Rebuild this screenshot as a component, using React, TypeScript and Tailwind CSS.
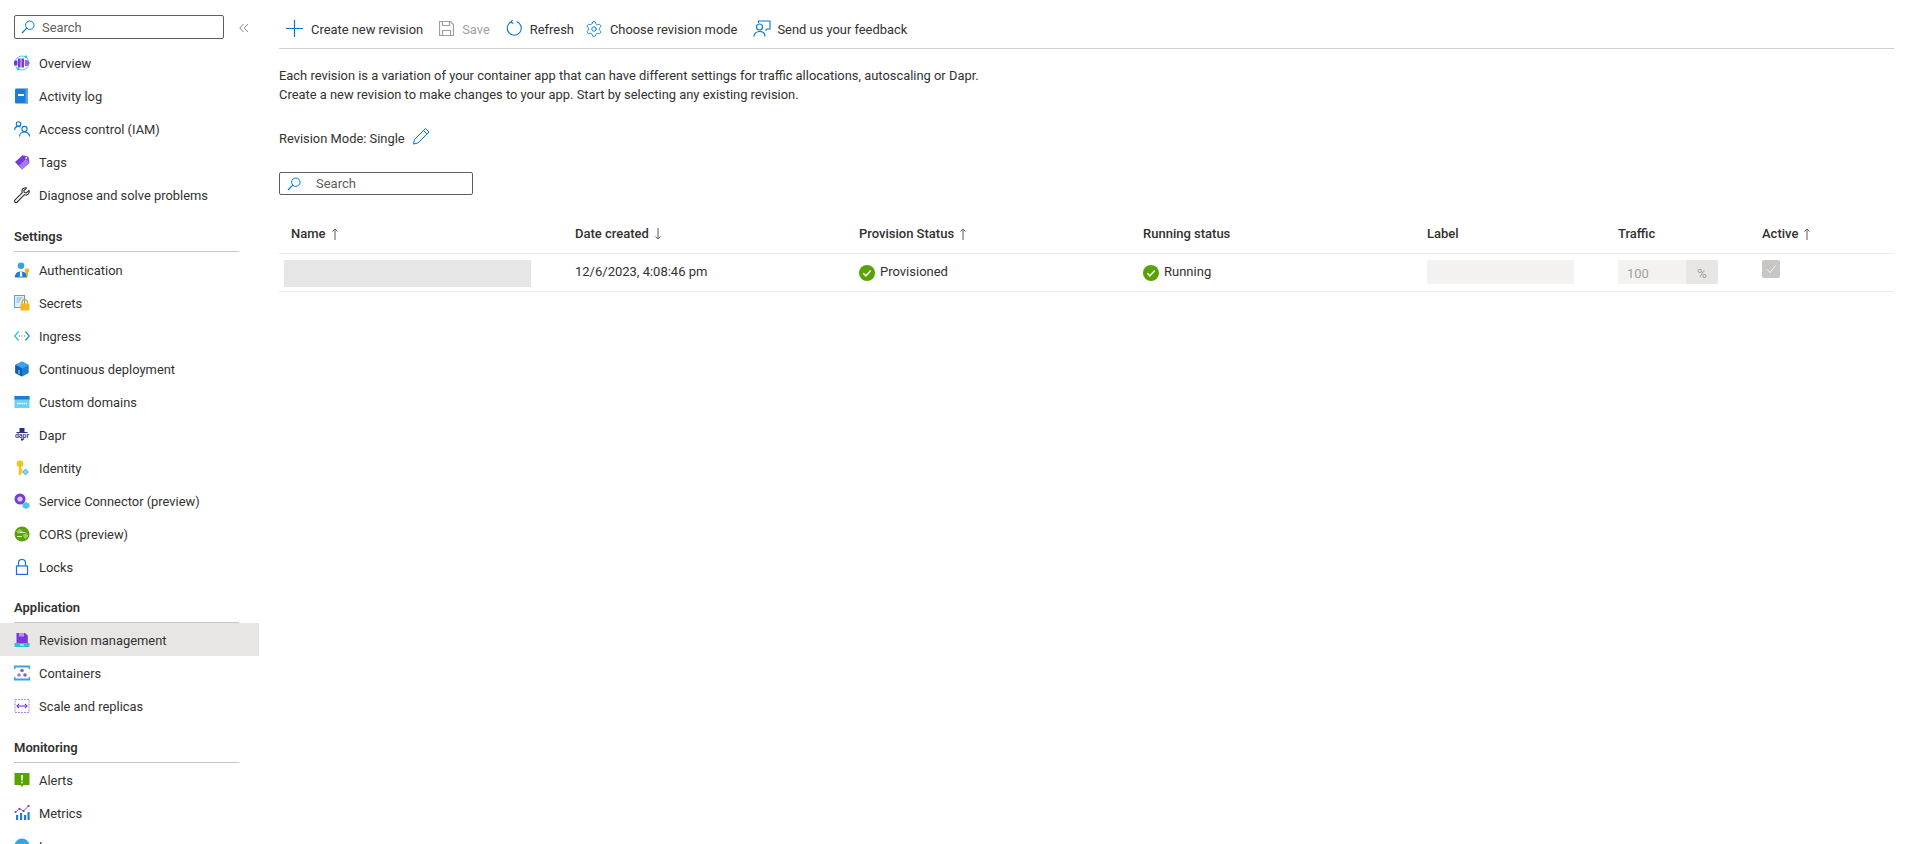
import type { ReactNode } from 'react';
import { Settings } from 'lucide-react';

function Lens() {
  return (
    <svg width="14" height="14" viewBox="0 0 14 14" fill="none" stroke="#0078d4" strokeWidth="1">
      <circle cx="8.8" cy="5.2" r="4.2" />
      <path d="M5.8 8.2 1 13" strokeWidth="1.2" />
    </svg>
  );
}

const icons: Record<string, ReactNode> = {
  overview: (
    <>
      <circle cx="8" cy="8" r="7" fill="none" stroke="#50c7e8" strokeWidth="1" />
      <path d="M1 5.5h2.5v5H1a1 1 0 0 1-1-1v-3a1 1 0 0 1 1-1z" fill="#773adc" />
      <path d="M4 3.5h2.6v9H4zM7.4 3.5H10v9H7.4z" fill="#773adc" />
      <path d="M10.8 5h2.6l2.4 3-2.4 3h-2.6z" fill="#9b5fe8" />
      <circle cx="12" cy="1.8" r="1.4" fill="#32bedd" />
      <circle cx="4" cy="14" r="1.4" fill="#32bedd" />
    </>
  ),
  activity: (
    <>
      <rect x="1" y="0.5" width="13" height="15" rx="1.2" fill="#1b7ed4" />
      <rect x="11.5" y="0.5" width="2.5" height="15" fill="#5ea0ef" />
      <rect x="4" y="6" width="6" height="2" fill="#fff" />
    </>
  ),
  iam: (
    <g fill="none" stroke="#0078d4" strokeWidth="1.1">
      <circle cx="4.5" cy="3" r="2.2" />
      <path d="M.7 9c0-2.2 1.6-3.6 3.8-3.6.8 0 1.5.2 2.1.5" />
      <circle cx="10.5" cy="8" r="2.6" />
      <path d="M5.5 15.5c0-2.6 2.2-4.5 5-4.5s5 1.9 5 4.5" />
    </g>
  ),
  tags: (
    <>
      <path d="M1 8 8.5 1.2l6 1.5 1 6L8 15.5z" fill="#773adc" />
      <path d="M5 11.7 12 5l3.5 3.7L8 15.5z" fill="#a67af4" />
      <circle cx="12.3" cy="4" r="1" fill="#fff" />
    </>
  ),
  wrench: (
    <path
      d="M15 3.5 12.3 6l-2-.4-.5-2L12.5 1C10.5.3 8.3 1.4 8 3.5c-.1.8 0 1.5.3 2.1L1 12.8c-.7.7-.7 1.6 0 2.2s1.5.6 2.2 0l7.2-7.3c.6.3 1.3.4 2 .3 2.2-.4 3.3-2.5 2.6-4.5z"
      fill="none"
      stroke="#323130"
      strokeWidth="1.1"
    />
  ),
  auth: (
    <>
      <circle cx="7" cy="3.8" r="3.3" fill="#32a5dd" />
      <path d="M.8 15.5c0-4 2.4-6 6.2-6s6.2 2 6.2 6z" fill="#1b7ed4" />
      <path d="M6.2 9.5h1.6l.5 5H5.7z" fill="#fff" />
      <circle cx="13" cy="8.5" r="2.3" fill="#f5b91e" />
      <path d="M12.2 9.5h1.6v5h-1.6z" fill="#e8a500" />
    </>
  ),
  secrets: (
    <>
      <rect x="0.5" y="0.5" width="10" height="12" fill="#e2f0fb" stroke="#5ea0d8" />
      <path d="M2.5 3h6M2.5 5h4M2.5 7h3" stroke="#7ab0dc" strokeWidth="1" />
      <path d="M8 9V7.5a2.8 2.8 0 0 1 5.6 0V9" fill="none" stroke="#e8a500" strokeWidth="1.2" />
      <rect x="6.5" y="8.5" width="9" height="7" rx="0.6" fill="#f8b51c" />
    </>
  ),
  ingress: (
    <>
      <path d="M4.5 3.5 0.8 8l3.7 4.5" fill="none" stroke="#32bedd" strokeWidth="1.3" />
      <path d="M11.5 3.5 15.2 8l-3.7 4.5" fill="none" stroke="#1b8fe0" strokeWidth="1.3" />
      <path d="M5 8h1M7.5 8h1M10 8h1" stroke="#76bc2d" strokeWidth="1.4" />
    </>
  ),
  deploy: (
    <>
      <path d="M8 0.5 14.7 4v8L8 15.5 1.3 12V4z" fill="#1b7ed4" />
      <path d="M8 .5 14.7 4 8 7.5 1.3 4z" fill="#3ea0ef" />
      <path d="M1.3 4 8 7.5v8L1.3 12z" fill="#0a5cb0" />
      <path d="M5 9v4" stroke="#bfe0f7" strokeWidth="1" />
    </>
  ),
  domains: (
    <>
      <rect x="0.5" y="2" width="15" height="12" fill="#6ad2f0" />
      <rect x="0.5" y="2" width="15" height="3.5" fill="#1b7ed4" />
      <path d="M3 9.5h10" stroke="#fff" strokeWidth="1.5" strokeDasharray="1.5 .7" />
    </>
  ),
  dapr: (
    <>
      <rect x="5.5" y="1" width="5" height="4.5" fill="#2a2f7e" />
      <rect x="2.5" y="5" width="11" height="1" fill="#2a2f7e" />
      <text x="8" y="11" textAnchor="middle" fontSize="7" fontWeight="700" fill="#3c4196" fontFamily="Roboto, sans-serif">
        dapr
      </text>
      <rect x="7" y="11.5" width="2" height="2" fill="#2a2f7e" />
    </>
  ),
  identity: (
    <>
      <circle cx="6" cy="3.8" r="3.3" fill="#f8c21c" />
      <path d="M4.8 6h2.4v9H4.8z" fill="#f8c21c" />
      <path d="M7 10h1.5M7 12h1.5" stroke="#e8a500" strokeWidth="1" />
      <path d="m11.5 8.5 3.5 3.5-3.5 3.5L8 12z" fill="#6cbde8" />
      <path d="m11.5 10.5 1.5 1.5-1.5 1.5L10 12z" fill="#a9dcf2" />
    </>
  ),
  connector: (
    <>
      <circle cx="6" cy="6" r="5.5" fill="#773adc" />
      <circle cx="6" cy="6" r="2.6" fill="#d9c8f7" />
      <path d="m12 9 3.5 1.8v3.4L12 16l-3.5-1.8v-3.4z" fill="#50c7e8" />
    </>
  ),
  cors: (
    <>
      <circle cx="8" cy="8" r="7.5" fill="#57a300" />
      <path d="M2 5.5 6 3l3 2.5L5 8zM8.5 9l4-2 2 3-3.5 3z" fill="#9ecb5e" />
      <path d="M3 10.5h5M6 6.5h5.5" stroke="#fff" strokeWidth=".8" />
    </>
  ),
  locks: (
    <g fill="none" stroke="#1b6ee0" strokeWidth="1.2">
      <path d="M4.5 7V4a3.5 3.5 0 0 1 7 0v3" />
      <rect x="2.5" y="7" width="11" height="8.4" />
    </g>
  ),
  revision: (
    <>
      <path d="M2.5 1H11l2.8 2.5V12H2.5z" fill="#773adc" />
      <path d="M5 1h5v3.5H5z" fill="#b796f0" />
      <path d="M0.5 11h15v3a1 1 0 0 1-1 1h-13a1 1 0 0 1-1-1z" fill="#32bedd" />
      <rect x="6" y="12.4" width="4" height="1" fill="#fff" />
    </>
  ),
  containers: (
    <>
      <path d="M.5 4V1.5h15V4M.5 12v2.5h15V12" fill="none" stroke="#32a5dd" strokeWidth="1.8" />
      <circle cx="8" cy="5.5" r="1.8" fill="#8661c5" />
      <circle cx="5" cy="10" r="1.8" fill="#9e7bd6" />
      <circle cx="11" cy="10" r="1.8" fill="#8661c5" />
    </>
  ),
  scale: (
    <g fill="none" stroke="#a98ae8" strokeWidth="1.1">
      <rect x="1" y="1.5" width="14" height="13" strokeDasharray="2 1" />
      <path d="M3 8h10" stroke="#773adc" />
      <path d="M5 6 3 8l2 2M11 6l2 2-2 2" stroke="#773adc" />
    </g>
  ),
  alerts: (
    <>
      <path d="M.5 1h15v12h-6L8 15l-1.5-2h-6z" fill="#57a300" />
      <rect x="7.2" y="3" width="1.6" height="5.5" fill="#fff" />
      <rect x="7.2" y="9.7" width="1.6" height="1.6" fill="#fff" />
    </>
  ),
  metrics: (
    <>
      <path d="M2 15V10h2.2v5zM6 15V8h2.2v7zM10 15v-5h2.2v5zM13.5 15V7h2.1v8z" fill="#1b7ed4" />
      <path d="M1.5 7 5.5 3.8 9.5 6l5-5" fill="none" stroke="#8661c5" strokeWidth="1" />
      <circle cx="1.5" cy="7" r="1.1" fill="#773adc" />
      <circle cx="5.5" cy="3.8" r="1.1" fill="#773adc" />
      <circle cx="9.5" cy="6" r="1.1" fill="#773adc" />
      <circle cx="14.5" cy="1" r="1.1" fill="#773adc" />
    </>
  ),
  logs: (
    <>
      <circle cx="8" cy="8" r="7.5" fill="#32a5e8" />
      <path d="m5 8 2 2 4-4" fill="none" stroke="#fff" strokeWidth="1.3" />
    </>
  ),
};

function Row({ icon, label, active }: { icon: string; label: string; active?: boolean }) {
  return (
    <div className={`flex h-[33px] items-center pl-[14px] ${active ? 'bg-[#e8e6e4]' : ''}`}>
      <svg width="16" height="16" viewBox="0 0 16 16" className="mr-[9px] w-[16px] shrink-0">
        {icons[icon]}
      </svg>
      <span className="pt-[2px]">{label}</span>
    </div>
  );
}

function Section({ title, height }: { title: string; height: string }) {
  return (
    <div className={`flex flex-col justify-end ${height}`}>
      <div className="ml-[14px] mr-[20px] border-b border-[#c8c6c4] pb-[4px] text-[13px] font-semibold leading-[20px]">
        {title}
      </div>
    </div>
  );
}

function Sidebar() {
  return (
    <aside className="h-[844px] w-[259px] shrink-0 overflow-hidden text-[12.9px] text-[#323130]">
      <div className="flex h-[46px] items-start pt-[15px]">
        <div className="ml-[14px] flex h-[24px] w-[210px] items-center gap-[7px] rounded-[2px] border border-[#605e5c] pl-[6px]">
          <Lens />
          <span className="pt-[1px] text-[#605e5c]">Search</span>
        </div>
        <svg width="10" height="10" viewBox="0 0 10 10" fill="none" stroke="#8a8886" className="ml-[15px] mt-[8px]">
          <path d="M4.5 1 .8 5l3.7 4M9 1 5.3 5 9 9" />
        </svg>
      </div>
      <Row icon="overview" label="Overview" />
      <Row icon="activity" label="Activity log" />
      <Row icon="iam" label="Access control (IAM)" />
      <Row icon="tags" label="Tags" />
      <Row icon="wrench" label="Diagnose and solve problems" />
      <div className="mb-[1px]">
        <Section title="Settings" height="h-[41px]" />
      </div>
      <Row icon="auth" label="Authentication" />
      <Row icon="secrets" label="Secrets" />
      <Row icon="ingress" label="Ingress" />
      <Row icon="deploy" label="Continuous deployment" />
      <Row icon="domains" label="Custom domains" />
      <Row icon="dapr" label="Dapr" />
      <Row icon="identity" label="Identity" />
      <Row icon="connector" label="Service Connector (preview)" />
      <Row icon="cors" label="CORS (preview)" />
      <Row icon="locks" label="Locks" />
      <Section title="Application" height="h-[40px]" />
      <Row icon="revision" label="Revision management" active />
      <Row icon="containers" label="Containers" />
      <Row icon="scale" label="Scale and replicas" />
      <Section title="Monitoring" height="h-[41px]" />
      <Row icon="alerts" label="Alerts" />
      <Row icon="metrics" label="Metrics" />
      <Row icon="logs" label="Logs" />
    </aside>
  );
}

function Tool({
  icon,
  label,
  disabled,
  className = 'gap-[8px]',
}: {
  icon: ReactNode;
  label: string;
  disabled?: boolean;
  className?: string;
}) {
  return (
    <div className={`flex items-center ${disabled ? 'text-[#a19f9d]' : ''} ${className}`}>
      {icon}
      <span className="pt-[1px]">{label}</span>
    </div>
  );
}

function Toolbar() {
  return (
    <div className="flex h-[49px] items-center gap-[16px] border-b border-[#d2d0ce] pl-[7px] pt-[10px] text-[12.9px]">
      <Tool
        label="Create new revision"
        icon={
          <svg width="17" height="17" viewBox="0 0 17 17" stroke="#0078d4" strokeWidth="1.2">
            <path d="M8.5 0v17M0 8.5h17" />
          </svg>
        }
      />
      <Tool
        disabled
        label="Save"
        icon={
          <svg width="15" height="15" viewBox="0 0 15 15" fill="none" stroke="#a19f9d" strokeWidth="1.2">
            <path d="M.5.5h11l3 3v11H.5z" />
            <path d="M3.5.5v4h7v-4M3.5 14.5v-5h8v5" />
          </svg>
        }
      />
      <Tool
        className="mr-[-5px] gap-[7px]"
        label="Refresh"
        icon={
          <svg width="17" height="17" viewBox="0 0 17 17" fill="none" stroke="#0078d4" strokeWidth="1.1">
            <path d="M10.5 1.6a7 7 0 1 1-5 .2" />
            <path d="M6.5 0 5 2.2l2.4 1.4" />
          </svg>
        }
      />
      <Tool className="gap-[7px]" label="Choose revision mode" icon={<Settings size={18} color="#0078d4" strokeWidth={1.2} />} />
      <Tool
        className="gap-[6px]"
        label="Send us your feedback"
        icon={
          <svg width="18" height="17" viewBox="0 0 18 17" fill="none" stroke="#0078d4" strokeWidth="1.1">
            <circle cx="6.5" cy="7" r="3" />
            <path d="M1 16.5c0-3 2.3-5 5.5-5s5.5 2 5.5 5" />
            <path d="M5.5 3V1H17v8h-3l-1.5 1.5" />
          </svg>
        }
      />
    </div>
  );
}

function Sort({ dir }: { dir: 'up' | 'down' }) {
  return (
    <svg width="8" height="12" viewBox="0 0 8 12" fill="none" stroke="#605e5c" strokeWidth="1" className="ml-[5px]">
      {dir === 'up' ? <path d="M4 12V1M1.5 3.5 4 1l2.5 2.5" /> : <path d="M4 0v11M1.5 8.5 4 11l2.5-2.5" />}
    </svg>
  );
}

function Head({ label, sort, first }: { label: string; sort?: 'up' | 'down'; first?: boolean }) {
  return (
    <div className={`flex h-full items-center pb-[3px] font-medium ${first ? 'pl-[12px]' : 'pl-[10px]'}`}>
      {label}
      {sort ? <Sort dir={sort} /> : null}
    </div>
  );
}

function Check() {
  return (
    <svg width="16" height="16" viewBox="0 0 16 16" className="mr-[5px] mt-[3px] shrink-0">
      <circle cx="8" cy="8" r="8" fill="#57a300" />
      <path d="m4.3 8.300 2.600 2.500 4.800-5.300" fill="none" stroke="#fff" strokeWidth="1.5" />
    </svg>
  );
}

const columns = 'grid grid-cols-[286px_284px_284px_284px_191px_144px_142px]';

function RevisionTable() {
  return (
    <div className="mt-[22px] text-[13px]">
      <div className={`${columns} h-[37px] border-b border-[#edebe9]`}>
        <Head label="Name" sort="up" first />
        <Head label="Date created" sort="down" />
        <Head label="Provision Status" sort="up" />
        <Head label="Running status" />
        <Head label="Label" />
        <Head label="Traffic" />
        <Head label="Active" sort="up" />
      </div>
      <div className={`${columns} h-[38px] items-start border-b border-[#edebe9] pt-[6px]`}>
        <div className="ml-[5px] h-[27px] w-[247px] bg-[#e6e6e6]" />
        <div className="pl-[10px] pt-[2px]">12/6/2023, 4:08:46 pm</div>
        <div className="flex items-start pl-[10px] pt-[2px]">
          <Check />
          Provisioned
        </div>
        <div className="flex items-start pl-[10px] pt-[2px]">
          <Check />
          Running
        </div>
        <div className="ml-[10px] h-[24px] w-[147px] rounded-[2px] bg-[#f3f2f1]" />
        <div className="ml-[10px] flex h-[24px] w-[100px] overflow-hidden rounded-[2px] bg-[#f3f2f1] text-[#a19f9d]">
          <span className="w-[68px] pl-[9px] pt-[4px]">100</span>
          <span className="flex-1 bg-[#e8e6e4] pt-[4px] text-center">%</span>
        </div>
        <div className="ml-[10px] flex h-[18px] w-[18px] items-center justify-center rounded-[2px] bg-[#c8c6c4]">
          <svg width="12" height="12" viewBox="0 0 12 12" fill="none" stroke="#fff" strokeWidth="0.8">
            <path d="m2 6.5 3 3 5.5-7" />
          </svg>
        </div>
      </div>
    </div>
  );
}

export default function App() {
  return (
    <div className="flex h-[844px] w-full overflow-hidden bg-white font-['Roboto',sans-serif] text-[#323130]">
      <Sidebar />
      <main className="ml-[20px] mr-[16px] flex-1">
        <Toolbar />
        <p className="mt-[17px] text-[12.9px] leading-[19px]">
          Each revision is a variation of your container app that can have different settings for traffic allocations, autoscaling or Dapr.
          <br />
          Create a new revision to make changes to your app. Start by selecting any existing revision.
        </p>
        <div className="mt-[23px] flex h-[24px] items-center text-[12.9px]">
          <span className="pb-[1px]">Revision Mode: Single</span>
          <svg width="17" height="18" viewBox="0 0 17 17" fill="none" stroke="#0078d4" strokeWidth="1" className="mb-[7px] ml-[8px]">
            <path d="M12.5 1 16 4.5 5 15.5l-4.5 1 1-4.500z" />
            <path d="M10.5 3 14 6.5" />
          </svg>
        </div>
        <div className="mt-[21px] flex h-[23px] w-[194px] items-center rounded-[2px] border border-[#605e5c] pl-[7px] text-[13px] text-[#605e5c]">
          <Lens />
          <span className="ml-[15px] pt-[1px]">Search</span>
        </div>
        <RevisionTable />
      </main>
    </div>
  );
}
